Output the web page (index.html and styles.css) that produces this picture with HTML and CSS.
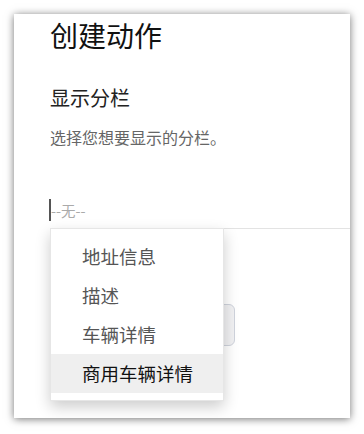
FILE: index.html
```html
<!DOCTYPE html>
<html>
<head lang="zh">
    <meta charset="UTF-8">
    <title>创建动作</title>
    <link rel="stylesheet" href="styles.css">
</head>
<body>
    <div id="page">
        <div class="card">
            <h1 class="title">创建动作</h1>
            <h2 class="subtitle">显示分栏</h2>
            <p class="hint">选择您想要显示的分栏。</p>
            <div class="field">
                <div class="input"><span class="caret"></span><span class="placeholder">--无--</span></div>
                <ul class="menu">
                    <li>地址信息</li>
                    <li>描述</li>
                    <li>车辆详情</li>
                    <li class="active">商用车辆详情</li>
                </ul>
            </div>
            <div class="btn"></div>
        </div>
    </div>
</body>
</html>
```

FILE: styles.css
```css
*{
    margin: 0;
    padding: 0;
}
ul{
    list-style: none;
}
body{
    background: #fff;
    font-family: "Noto Sans CJK SC", "Noto Sans", sans-serif;
}
#page{
    padding: 14px;
}
.card{
    width: 336px;
    height: 404px;
    background: #fff;
    box-shadow: 0 1px 8px rgba(0, 0, 0, 0.55);
    padding: 4px 0 0 36px;
    box-sizing: border-box;
    overflow: hidden;
}
.title{
    font-size: 28px;
    font-weight: normal;
    line-height: 34px;
    color: #111;
}
.subtitle{
    margin-top: 32px;
    font-size: 20px;
    font-weight: normal;
    line-height: 28px;
    color: #222;
}
.hint{
    margin-top: 14px;
    font-size: 16px;
    line-height: 22px;
    color: #666;
}
.field{
    position: relative;
    margin-top: 44px;
}
.input{
    display: flex;
    align-items: center;
    height: 36px;
    border-bottom: 1px solid #e3e3e3;
    margin-right: -1px;
}
.caret{
    width: 2px;
    height: 22px;
    background: #555;
    margin-left: -1px;
}
.placeholder{
    font-size: 14.5px;
    color: #aaa;
}
.menu{
    position: absolute;
    top: 36px;
    left: 0;
    width: 172px;
    padding: 8px 0 7px;
    background: #fff;
    border: 1px solid #e6e6e6;
    box-shadow: 0 6px 14px rgba(0, 0, 0, 0.2);
    z-index: 1;
}
.menu li{
    height: 39px;
    line-height: 39px;
    padding-left: 31px;
    font-size: 18.5px;
    color: #555;
}
.menu li.active{
    background: #efefef;
    color: #111;
}
.btn{
    margin-top: 75px;
    width: 183px;
    height: 40px;
    border: 1px solid #cfd3dc;
    border-radius: 6px;
    background: #f1f1f3;
}
```
